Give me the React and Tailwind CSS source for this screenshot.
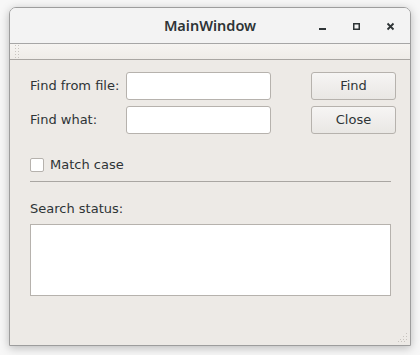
import React from 'react';

const ui = { fontFamily: '"DejaVu Sans", "Noto Sans", sans-serif' };

function Field() {
  return <div className="h-[28px] w-[145px] rounded-[3px] border border-[#b6b2ad] bg-white" />;
}

function Button({ children }) {
  return (
    <button className="flex h-[28px] w-[85px] items-center justify-center rounded-[3px] border border-[#b6b2ad] bg-gradient-to-b from-[#f6f5f4] to-[#e9e7e4] text-[13px] text-[#2e3436]">
      {children}
    </button>
  );
}

function Dots({ className }) {
  return (
    <svg className={className} width="6" height="16" viewBox="0 0 6 16">
      {[1, 4, 7, 10, 13].map((y) => (
        <g key={y} fill="#c8c4bf">
          <rect x="0" y={y} width="1" height="1" />
          <rect x="3" y={y} width="1" height="1" />
        </g>
      ))}
    </svg>
  );
}

export default function App() {
  return (
    <div className="h-[355px] w-[420px] bg-[#f7f7f7] pl-[9px] pt-[7px]" style={ui}>
      <div className="flex h-[339px] w-[402px] flex-col overflow-hidden rounded-t-[7px] border border-[#9d9d9d] shadow-[0_2px_10px_rgba(0,0,0,0.25)]">
        {/* title bar */}
        <div className="relative flex h-[36px] shrink-0 items-center justify-center border-b border-[#a6a6a6] bg-[#f3f3f3]">
          <span className="text-[14.5px] font-semibold text-[#2e3436]" style={{ fontFamily: '"Noto Sans", sans-serif' }}>
            MainWindow
          </span>
          <div className="absolute right-[15px] top-[14px] flex items-center gap-[25px]">
            <svg width="9" height="9" viewBox="0 0 9 9">
              <rect x="1" y="6" width="7" height="2" fill="#2e3436" />
            </svg>
            <svg width="9" height="9" viewBox="0 0 9 9">
              <rect x="1.75" y="1.75" width="5.5" height="5.5" fill="none" stroke="#2e3436" strokeWidth="1.5" />
            </svg>
            <svg width="9" height="9" viewBox="0 0 9 9">
              <path d="M1.5 1.5 L7.5 7.5 M7.5 1.5 L1.5 7.5" stroke="#2e3436" strokeWidth="1.8" />
            </svg>
          </div>
        </div>

        {/* toolbar */}
        <div className="flex h-[16px] shrink-0 items-center border-b border-[#a9a6a2] bg-gradient-to-b from-[#f6f4f1] to-[#efece8] pl-[5px]">
          <Dots />
        </div>

        {/* content */}
        <div className="relative flex flex-1 flex-col bg-[#edeae6] px-[20px] pt-[12px] text-[13px] text-[#2e3436]">
          <div className="flex gap-[40px]">
            <div className="grid grid-cols-[96px_145px] gap-y-[6px]">
              <span className="flex items-center">Find from file:</span>
              <Field />
              <span className="flex items-center">Find what:</span>
              <Field />
            </div>
            <div className="flex flex-col gap-[6px]">
              <Button>Find</Button>
              <Button>Close</Button>
            </div>
          </div>

          <label className="mt-[21px] flex items-center gap-[6px]">
            <span className="h-[14px] w-[14px] rounded-[2px] border border-[#b6b2ad] bg-white" />
            <span>Match case</span>
          </label>

          <div className="mt-[6px] h-px w-[361px] bg-[#a9a6a2]" />

          <div className="mt-[17px]">Search status:</div>

          <div className="mt-[6px] h-[72px] w-[361px] border border-[#b6b2ad] bg-white" />

          <svg className="absolute bottom-[2px] right-[2px]" width="10" height="10" viewBox="0 0 10 10">
            <g fill="#c8c4bf">
              <rect x="8" y="0" width="1" height="1" />
              <rect x="5" y="3" width="1" height="1" />
              <rect x="8" y="3" width="1" height="1" />
              <rect x="2" y="6" width="1" height="1" />
              <rect x="5" y="6" width="1" height="1" />
              <rect x="8" y="6" width="1" height="1" />
              <rect x="0" y="8" width="1" height="1" />
              <rect x="3" y="8" width="1" height="1" />
              <rect x="6" y="8" width="1" height="1" />
            </g>
          </svg>
        </div>
      </div>
    </div>
  );
}
